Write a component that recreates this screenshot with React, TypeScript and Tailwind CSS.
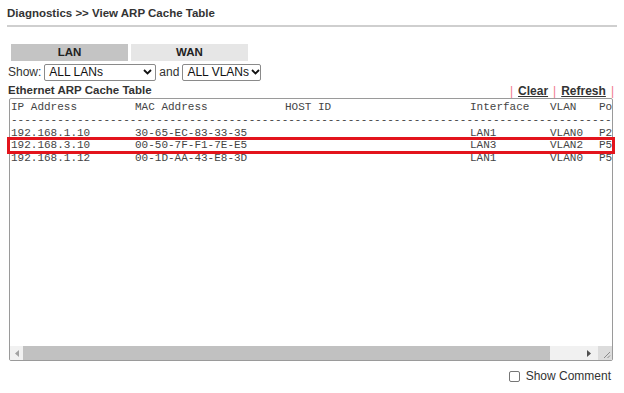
const rows = [
  ["192.168.1.10", "30-65-EC-83-33-35", "", "LAN1", "VLAN0", "P2"],
  ["192.168.3.10", "00-50-7F-F1-7E-E5", "", "LAN3", "VLAN2", "P5"],
  ["192.168.1.12", "00-1D-AA-43-E8-3D", "", "LAN1", "VLAN0", "P5"],
];

const Chevron = () => (
  <svg width="9" height="6" viewBox="0 0 9 6" className="shrink-0">
    <path d="M1 1l3.5 3.5L8 1" fill="none" stroke="#111" strokeWidth="1.8" />
  </svg>
);

const Select = ({ label, w }: { label: string; w: string }) => (
  <div
    className={`${w} h-[17px] flex items-center justify-between gap-[2px] pl-[4px] pr-[3px] border border-[#8a8a8a] rounded-[2px] bg-white text-[12px] leading-[15px] text-[#111] whitespace-nowrap`}
  >
    <span>{label}</span>
    <Chevron />
  </div>
);

const Line = ({ cols }: { cols: string[] }) => (
  <div className="flex whitespace-pre h-[12.75px]">
    <span className="w-[124px] shrink-0">{cols[0]}</span>
    <span className="w-[150px] shrink-0">{cols[1]}</span>
    <span className="w-[185px] shrink-0">{cols[2]}</span>
    <span className="w-[80px] shrink-0">{cols[3]}</span>
    <span className="w-[49px] shrink-0">{cols[4]}</span>
    <span className="shrink-0">{cols[5]}</span>
  </div>
);

export default function App() {
  return (
    <div className="w-[624px] h-[393px] bg-white font-['Liberation_Sans',Arial,sans-serif] text-[#333] pl-[7px] pt-[6px] overflow-hidden">
      <div className="text-[11.5px] font-bold leading-[14px]">Diagnostics &gt;&gt; View ARP Cache Table</div>
      <div className="mt-[5px] h-[2px] w-[610px] bg-[#cfcfcf]" />

      <div className="mt-[17px] ml-[4px] flex gap-[3px] text-[11.5px] font-bold leading-[17px] text-[#222]">
        <div className="w-[117px] h-[17px] bg-[#c4c4c4] text-center">LAN</div>
        <div className="w-[117px] h-[17px] bg-[#e6e6e6] text-center">WAN</div>
      </div>

      <div className="mt-[2px] ml-[1px] flex items-center gap-[3px] text-[12px] text-[#333]">
        <span>Show:</span>
        <Select label="ALL LANs" w="w-[112px]" />
        <span>and</span>
        <Select label="ALL VLANs" w="w-[79px]" />
      </div>

      <div className="mt-[2px] h-[16px] flex items-center justify-between w-[606px] ml-[1px] text-[11.5px] font-bold">
        <span>Ethernet ARP Cache Table</span>
        <div className="flex items-center gap-[5px] text-[12px]">
          <span className="text-[#f07a8c] font-normal">|</span>
          <span className="underline text-[#333]">Clear</span>
          <span className="text-[#f07a8c] font-normal">|</span>
          <span className="underline text-[#333]">Refresh</span>
          <span className="text-[#f07a8c] font-normal">|</span>
        </div>
      </div>

      <div className="relative ml-[2px] -mt-[1px] w-[604px] h-[263px]">
        <div className="w-full h-full border border-[#9a9a9a] rounded-[2px] flex flex-col overflow-hidden">
          <div className="flex-1 overflow-hidden pl-[1px] pt-[2px] font-['Liberation_Mono','Courier_New',monospace] text-[11px] leading-[12.75px] text-[#444]">
            <Line cols={["IP Address", "MAC Address", "HOST ID", "Interface", "VLAN", "Port"]} />
            <div className="whitespace-pre h-[12.75px]">{"-".repeat(120)}</div>
            {rows.map((r) => (
              <Line key={r[0]} cols={r} />
            ))}
          </div>
          <div className="h-[14px] flex items-center bg-[#f1f1f1]">
            <div className="w-[13px] flex justify-center">
              <svg width="4" height="7" viewBox="0 0 4 7">
                <path d="M4 0v7L0 3.5z" fill="#a3a3a3" />
              </svg>
            </div>
            <div className="w-[527px] h-[14px] bg-[#c1c1c1]" />
            <div className="flex-1 flex justify-end pr-[7px]">
              <svg width="4" height="7" viewBox="0 0 4 7">
                <path d="M0 0v7l4-3.5z" fill="#505050" />
              </svg>
            </div>
            <div className="w-[14px] h-[14px] bg-[#dcdcdc] relative">
              <svg width="14" height="14" viewBox="0 0 14 14" className="absolute inset-0">
                <path d="M12 6L6 12M12 9.5L9.5 12" stroke="#8a8a8a" strokeWidth="1" />
              </svg>
            </div>
          </div>
        </div>
        <div className="absolute left-[-2px] top-[39px] w-[608px] h-[17px] border-[3px] border-[#e3141c]" />
      </div>

      <div className="mt-[6px] w-[604px] flex items-center justify-end gap-[6px] text-[12px] text-[#333]">
        <div className="w-[11px] h-[11px] border border-[#767676] rounded-[2px] bg-white" />
        <span>Show Comment</span>
      </div>
    </div>
  );
}
